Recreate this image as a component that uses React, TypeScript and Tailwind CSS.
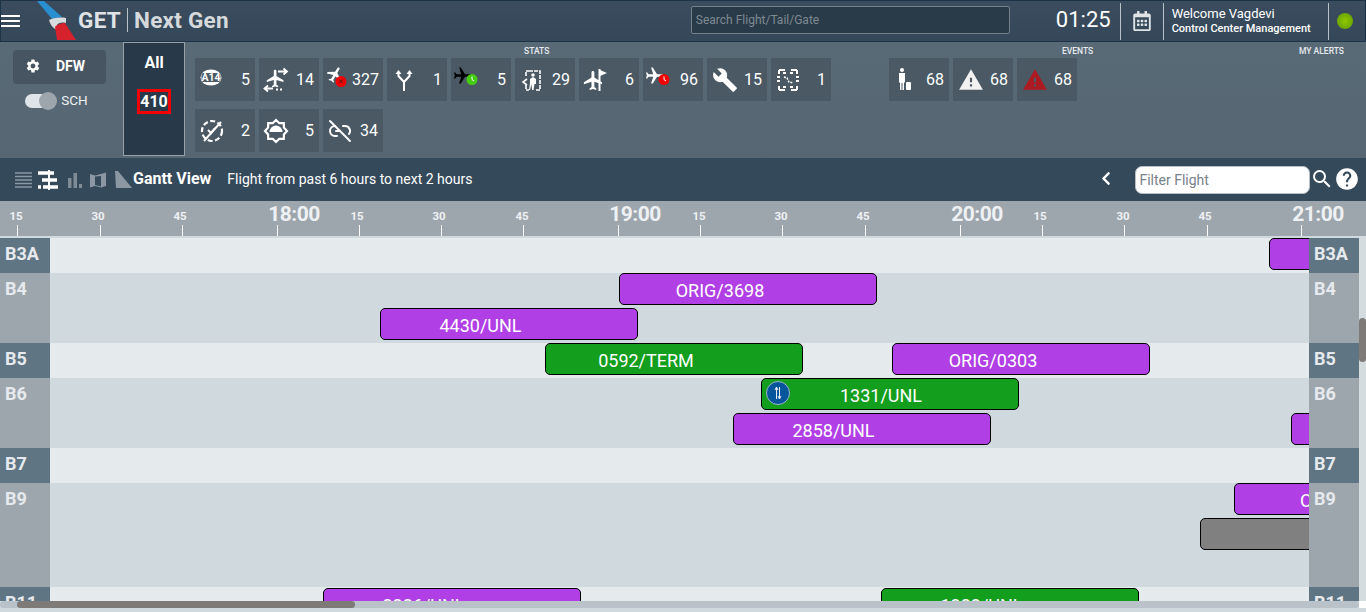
import React from "react";
import { MdBuild, MdHelp, MdSearch, MdSettings, MdWarning, MdMenu } from "react-icons/md";
import { FaChevronLeft, FaRegCalendarAlt } from "react-icons/fa";
import { Link2Off } from "lucide-react";

const PLANE = "M21 16v-2l-8-5V3.5c0-.83-.67-1.5-1.5-1.5S10 2.67 10 3.5V9l-8 5v2l8-2.5V19l-2 1.5V22l3.5-1 3.5 1v-1.5L13 19v-5.5l8 2.5z";

function Svg({ children, w = 24, h = 24 }: { children: React.ReactNode; w?: number; h?: number }) {
  return (
    <svg width={w} height={h} viewBox="0 0 24 24" className="shrink-0 overflow-visible">
      {children}
    </svg>
  );
}

const IconA14 = () => (
  <Svg>
    <ellipse cx="11" cy="9.500" rx="10.500" ry="8" fill="white" />
    <rect x="1.500" y="5" width="19" height="9" rx="2" fill="#4a5964" />
    <text x="11" y="13.300" textAnchor="middle" fontSize="10.500" fontWeight="700" fill="white" fontFamily="Roboto">A14</text>
  </Svg>
);
const IconPlaneArrows = () => (
  <Svg>
    <path d={PLANE} fill="white" transform="translate(1 0) scale(.88)" />
    <path d="M14 3.500h8M19.500 .5l3.500 3-3.500 3M9 20.500H1M4 17.500L.5 20.500 4 23.500" stroke="white" strokeWidth="1.800" fill="none" />
    <path d="M12 21.500h7" stroke="white" strokeWidth="1.800" strokeDasharray="2 2" />
  </Svg>
);
const IconPlaneX = () => (
  <Svg>
    <path d={PLANE} fill="white" transform="translate(7 6.500) rotate(30) scale(.8) translate(-11.500 -12)" />
    <circle cx="13" cy="13.500" r="5.500" fill="#f00000" />
    <path d="M11.300 11.800l3.400 3.400M14.700 11.800l-3.400 3.400" stroke="#8a1010" strokeWidth="1.300" />
  </Svg>
);
const IconPlaneClock = ({ fill, badge }: { fill: string; badge: string }) => (
  <Svg>
    <path d={PLANE} fill={fill} transform="translate(6.500 7.500) rotate(90) scale(.85) translate(-11.500 -12)" />
    <circle cx="16" cy="11.500" r="5.500" fill={badge} />
    <path d="M16 8.500v3l2 1.500" stroke="white" strokeWidth="1" fill="none" />
  </Svg>
);
const IconFork = () => (
  <Svg>
    <path d="M12 23v-9M12 14L6.500 8V4M12 14l5.500-6V4" stroke="white" strokeWidth="2" fill="none" />
    <path d="M3.500 6l3-4 3 4zM14.500 6l3-4 3 4z" fill="white" />
  </Svg>
);
const IconDoor = () => (
  <Svg>
    <path d="M9 3h11v19h-5M6 8V3h3M6 17v5h3" stroke="white" strokeWidth="1.600" fill="none" strokeDasharray="4 1" />
    <circle cx="13" cy="7" r="1.800" fill="white" />
    <path d="M10 11l3-2 3 2v5h-1.500l-1 6h-1.500l-.5-6-1.500 6H9l1-7z" fill="white" />
    <path d="M7 11l-4 3 4 3" stroke="white" strokeWidth="1.600" fill="none" />
  </Svg>
);
const IconPlaneFlag = () => (
  <Svg>
    <path d={PLANE} fill="white" transform="translate(-2 1) scale(.95)" />
    <path d="M15.500 1v22" stroke="white" strokeWidth="2" />
    <path d="M16 2l7 3-7 3z" fill="white" />
  </Svg>
);
const IconDashBox = () => (
  <Svg>
    <path d="M3 2h6M3 2v4M21 2h-6M21 2v4M3 22h6M3 22v-4M21 22h-6M21 22v-4M1 9h3M20 9h3M1 13h3M20 13h3M7 5h3M14 5h3M7 19h3M14 19h3" stroke="white" strokeWidth="2" fill="none" />
    <path d="M8 9l3 1 2 4 4 1" stroke="white" strokeWidth="1.600" fill="none" strokeDasharray="2 1" />
  </Svg>
);
const IconDashCircle = () => (
  <Svg>
    <circle cx="12" cy="12" r="10" stroke="white" strokeWidth="2.200" fill="none" strokeDasharray="5 2.500" />
    <path d="M21 3L4 22" stroke="white" strokeWidth="2" />
    <path d="M8 11l3 3 4-5" stroke="white" strokeWidth="2" fill="none" />
  </Svg>
);
const IconBadge = () => (
  <Svg>
    <path d="M12 1l3.300 3.200 4.500-.1.1 4.500L23 12l-3.100 3.400-.1 4.500-4.500-.1L12 23l-3.300-3.200-4.500.1-.1-4.500L1 12l3.100-3.400.1-4.500 4.500.1z" fill="none" stroke="white" strokeWidth="2.200" />
    <path d="M5.500 13a6.500 6.500 0 0 1 13 0z" fill="white" />
  </Svg>
);
const IconPerson = () => (
  <Svg>
    <circle cx="8" cy="2" r="2" fill="white" />
    <path d="M5 5h6v9.500h-1V22H8.500v-7h-1v7H6v-7.500H5z" fill="white" />
    <rect x="12" y="14" width="5" height="8" rx="1" fill="white" />
  </Svg>
);

function Tile({ icon, value }: { icon: React.ReactNode; value: number }) {
  return (
    <div className="flex h-[43px] w-[60px] items-center justify-between bg-[#4a5964] pl-[5px] pr-[5px]">
      <div className="flex w-[24px] justify-start">{icon}</div>
      <span className="text-[16px] leading-none text-white">{value}</span>
    </div>
  );
}

function SmallHead({ children, cls }: { children: React.ReactNode; cls: string }) {
  return <div className={`absolute top-[4px] text-[8.500px] font-medium leading-[10px] text-[#e6eaee] ${cls}`}>{children}</div>;
}

const ticks = [
  { x: "left-[17px]", l: "left-[1px]", t: "15", hour: false },
  { x: "left-[100px]", l: "left-[83px]", t: "30", hour: false },
  { x: "left-[182px]", l: "left-[165px]", t: "45", hour: false },
  { x: "left-[277px]", l: "left-[254px]", t: "18:00", hour: true },
  { x: "left-[359px]", l: "left-[342px]", t: "15", hour: false },
  { x: "left-[441px]", l: "left-[424px]", t: "30", hour: false },
  { x: "left-[523px]", l: "left-[507px]", t: "45", hour: false },
  { x: "left-[618px]", l: "left-[595px]", t: "19:00", hour: true },
  { x: "left-[700px]", l: "left-[684px]", t: "15", hour: false },
  { x: "left-[782px]", l: "left-[766px]", t: "30", hour: false },
  { x: "left-[865px]", l: "left-[848px]", t: "45", hour: false },
  { x: "left-[960px]", l: "left-[937px]", t: "20:00", hour: true },
  { x: "left-[1042px]", l: "left-[1025px]", t: "15", hour: false },
  { x: "left-[1124px]", l: "left-[1108px]", t: "30", hour: false },
  { x: "left-[1207px]", l: "left-[1190px]", t: "45", hour: false },
  { x: "left-[1301px]", l: "left-[1278px]", t: "21:00", hour: true },
];

const rows = [
  { name: "B3A", h: "h-[35px]", light: true },
  { name: "B4", h: "h-[70px]", light: false },
  { name: "B5", h: "h-[35px]", light: true },
  { name: "B6", h: "h-[70px]", light: false },
  { name: "B7", h: "h-[35px]", light: true },
  { name: "B9", h: "h-[104px]", light: false },
  { name: "B11", h: "h-[35px]", light: true },
];

function Labels() {
  return (
    <div className="flex h-[384px] w-[50px] shrink-0 flex-col">
      {rows.map((r) => (
        <div
          key={r.name}
          className={`${r.h} shrink-0 pl-[5px] pt-[5px] text-[18px] font-bold leading-[21px] text-[#e6eaee] ${r.light ? "bg-[#5f7583]" : "bg-[#9ea6ad]"}`}
        >
          {r.name}
        </div>
      ))}
    </div>
  );
}

function Bar({ cls, text, pad, children }: { cls: string; text: string; pad: string; children?: React.ReactNode }) {
  return (
    <div className={`absolute flex h-[32px] w-[258px] items-center justify-center overflow-hidden rounded-[5px] border border-black pt-[3px] text-[18px] leading-none text-white ${cls} ${pad}`}>
      {children}
      {text}
    </div>
  );
}

export default function App() {
  return (
    <div className="relative h-[612px] w-[1366px] overflow-hidden bg-[#cfd9de] font-['Roboto',sans-serif]">
      {/* header */}
      <header className="flex h-[42px] items-center overflow-hidden border border-[#1d3347] bg-gradient-to-b from-[#3a4c5d] to-[#35485a] text-white">
        <MdMenu className="ml-[-3px] h-[24px] w-[24px] shrink-0 scale-x-110 text-white" />
        <svg width="46" height="40" viewBox="0 0 46 40" className="ml-[14px] shrink-0">
          <path d="M1 0h7l18 16-10 2z" fill="#2a8fd0" />
          <path d="M13 19c4-2 10-3 17-2v5c-5-1-8 0-9 2l1 3-3 1c-3-2-5-5-6-9z" fill="#d9dcde" />
          <path d="M19 26c1-2 6-4 10-4l11 17H21z" fill="#d5222c" />
        </svg>
        <span className="ml-[-4px] mb-[2px] text-[22.500px] font-bold leading-none tracking-[0.3px] text-[#dfe3e6]">GET</span>
        <span className="ml-[6px] mb-[2px] h-[24px] w-px bg-[#b9c2c9]" />
        <span className="ml-[6px] mb-[2px] text-[22.500px] font-bold leading-none tracking-[0.25px] text-[#d5d9dc]">Next Gen</span>
        <input
          placeholder="Search Flight/Tail/Gate"
          className="ml-[462px] mb-[3px] h-[28px] w-[319px] rounded-[2px] border border-[#74818b] bg-[#293a48] px-[4px] text-[12px] text-white placeholder:text-[#7f8a93]"
        />
        <span className="ml-[46px] mb-[3px] text-[22px] leading-none text-white">01:25</span>
        <span className="ml-[9px] h-[37px] w-px bg-[#b9c2c9]" />
        <FaRegCalendarAlt className="ml-[12px] h-[20px] w-[18px] shrink-0 text-[#dfe3e6]" />
        <span className="ml-[12px] h-[37px] w-px bg-[#b9c2c9]" />
        <div className="ml-[8px] w-[148px] shrink-0 leading-none">
          <div className="text-[13px] leading-[16px]">Welcome Vagdevi</div>
          <div className="whitespace-nowrap text-[11px] font-medium leading-[14px]">Control Center Management</div>
        </div>
        <span className="ml-[8px] h-[37px] w-px bg-[#b9c2c9]" />
        <span className="ml-[8px] h-[16px] w-[16px] rounded-full bg-[radial-gradient(circle,#8fc800,#5f9a00)]" />
      </header>

      {/* stats */}
      <section className="relative flex h-[116px] bg-gradient-to-b from-[#596a77] to-[#566672]">
        <div className="ml-[13px] mt-[8px] flex w-[93px] flex-col items-center">
          <div className="flex h-[34px] w-[93px] items-center rounded-[4px] bg-[#465561] pb-[2px] text-white">
            <MdSettings className="ml-[12px] h-[16px] w-[16px]" />
            <span className="ml-[15px] text-[14px] font-bold">DFW</span>
          </div>
          <div className="ml-[-6px] mt-[8px] flex items-center">
            <div className="relative flex h-[18px] w-[32px] items-center">
              <div className="h-[14px] w-[30px] rounded-full bg-[#dfe4e8]" />
              <div className="absolute right-0 h-[18px] w-[18px] rounded-full bg-[#9ea6ad]" />
            </div>
            <span className="ml-[4px] text-[13.500px] leading-none text-[#eef1f3]">SCH</span>
          </div>
        </div>
        <div className="ml-[17px] flex h-[114px] w-[62px] flex-col items-center border border-[#98a1a8] bg-[#283a4a] text-white">
          <span className="mt-[10px] text-[16px] font-bold leading-[19px]">All</span>
          <span className="mt-[17px] border-[3px] border-[#f00000] px-0 text-[16px] font-bold leading-[19px]">410</span>
        </div>
        <div className="ml-[10px] mt-[16px] flex flex-col gap-[8px]">
          <div className="flex gap-[4px]">
            <Tile icon={<IconA14 />} value={5} />
            <Tile icon={<IconPlaneArrows />} value={14} />
            <Tile icon={<IconPlaneX />} value={327} />
            <Tile icon={<IconFork />} value={1} />
            <Tile icon={<IconPlaneClock fill="black" badge="#44cc11" />} value={5} />
            <Tile icon={<IconDoor />} value={29} />
            <Tile icon={<IconPlaneFlag />} value={6} />
            <Tile icon={<IconPlaneClock fill="white" badge="#f00000" />} value={96} />
            <Tile icon={<MdBuild className="h-[26px] w-[26px] shrink-0 text-white" />} value={15} />
            <Tile icon={<IconDashBox />} value={1} />
          </div>
          <div className="flex gap-[4px]">
            <Tile icon={<IconDashCircle />} value={2} />
            <Tile icon={<IconBadge />} value={5} />
            <Tile icon={<Link2Off className="h-[24px] w-[24px] text-white" strokeWidth={2} />} value={34} />
          </div>
        </div>
        <div className="ml-[58px] mt-[16px] flex gap-[4px] self-start">
          <Tile icon={<IconPerson />} value={68} />
          <Tile icon={<MdWarning className="h-[26px] w-[26px] shrink-0 text-[#f2f2f2]" />} value={68} />
          <Tile icon={<MdWarning className="h-[26px] w-[26px] shrink-0 text-[#ad1a22]" />} value={68} />
        </div>
        <SmallHead cls="left-[524px]">STATS</SmallHead>
        <SmallHead cls="left-[1062px]">EVENTS</SmallHead>
        <SmallHead cls="left-[1299px]">MY ALERTS</SmallHead>
      </section>

      {/* toolbar */}
      <section className="flex h-[43px] items-center bg-[#34495a] text-white">
        <svg width="18" height="16" viewBox="0 0 18 16" className="ml-[15px] shrink-0">
          <path d="M0 1h17M0 4.500h17M0 8h17M0 11.500h17M0 15h17" stroke="#8b98a3" strokeWidth="1.600" />
        </svg>
        <svg width="20" height="20" viewBox="0 0 20 20" className="ml-[5px] shrink-0">
          <path d="M0 3h10M12 3h4M4 10h6M12 10h7M0 17h3M5 17h5M12 17h8" stroke="white" strokeWidth="3.600" />
          <path d="M11 0v20" stroke="white" strokeWidth="2" />
        </svg>
        <svg width="14" height="16" viewBox="0 0 14 16" className="ml-[10px] shrink-0">
          <path d="M0 6h3.500v10H0zM5.500 1H9v15H5.500zM11 12h3v4h-3z" fill="#7f8b95" />
        </svg>
        <svg width="16" height="16" viewBox="0 0 16 16" className="ml-[8px] shrink-0">
          <path d="M0 2l5 1.500L11 2l5-1.500V14l-5 1.500L5 14l-5 1.500z" fill="#8b98a3" />
          <path d="M5 4.500v8.500l6 1.500V4z" fill="#34495a" />
        </svg>
        <svg width="17" height="17" viewBox="0 0 17 17" className="ml-[9px] shrink-0">
          <path d="M0 0h3l14 17H1z" fill="#8b98a3" />
        </svg>
        <span className="ml-[1px] mb-[2px] whitespace-nowrap text-[16px] font-bold">Gantt View</span>
        <span className="ml-[16px] whitespace-nowrap text-[14px]">Flight from past 6 hours to next 2 hours</span>
        <FaChevronLeft className="ml-[628px] mb-[2px] h-[15px] w-[12px] shrink-0" />
        <input
          placeholder="Filter Flight"
          className="ml-[23px] h-[28px] w-[175px] rounded-[7px] border border-[#b7bfc5] bg-white px-[3px] text-[14px] text-[#333] placeholder:text-[#77828b]"
        />
        <MdSearch className="mb-[2px] h-[24px] w-[24px] shrink-0" />
        <MdHelp className="mb-[1px] h-[26px] w-[26px] shrink-0" />
      </section>

      {/* ruler */}
      <section className="relative h-[35px] bg-[#9ea6ad]">
        {ticks.map((t) => (
          <React.Fragment key={t.x}>
            <div className={`absolute bottom-0 h-[11px] w-px bg-white ${t.x}`} />
            <div
              className={
                t.hour
                  ? `absolute top-[1px] w-[80px] text-center text-[21px] font-bold leading-[24px] tracking-[-0.5px] text-[#eef1f4] ${t.l}`
                  : `absolute top-[8px] w-[30px] text-center text-[11.500px] font-bold leading-[14px] text-[#eef1f4] ${t.l}`
              }
            >
              {t.t}
            </div>
          </React.Fragment>
        ))}
      </section>

      {/* gantt */}
      <section className="mr-[7px] flex h-[365px] overflow-hidden bg-[#cfd9de] pt-[2px]">
        <Labels />
        <div className="relative h-[384px] min-w-0 flex-1 overflow-hidden">
          {rows.map((r) => (
            <div key={r.name} className={`${r.h} ${r.light ? "bg-[#e5eaed]" : "bg-[#cfd9de]"}`} />
          ))}
          <Bar cls="left-[1219px] top-[0px] bg-[#b13fe6]" text="" pad="" />
          <Bar cls="left-[569px] top-[35px] bg-[#b13fe6]" text="ORIG/3698" pad="pr-[56px]" />
          <Bar cls="left-[330px] top-[70px] bg-[#b13fe6]" text="4430/UNL" pad="pr-[57px]" />
          <Bar cls="left-[495px] top-[105px] bg-[#149e1e]" text="0592/TERM" pad="pr-[56px]" />
          <Bar cls="left-[842px] top-[105px] bg-[#b13fe6]" text="ORIG/0303" pad="pr-[56px]" />
          <Bar cls="left-[711px] top-[140px] bg-[#149e1e]" text="1331/UNL" pad="pr-[18px]">
            <span className="absolute left-[4px] top-[2px] flex h-[24px] w-[24px] items-center justify-center rounded-full border border-[#9db5c9] bg-[#07559a]">
              <svg width="12" height="16" viewBox="0 0 12 16">
                <path d="M4.500 14V3M4.500 2L3 5M4.500 2L6 5M7.500 2v11M7.500 14L6 11M7.500 14L9 11" stroke="white" strokeWidth=".9" fill="none" />
              </svg>
            </span>
          </Bar>
          <Bar cls="left-[683px] top-[175px] bg-[#b13fe6]" text="2858/UNL" pad="pr-[57px]" />
          <Bar cls="left-[1241px] top-[175px] bg-[#b13fe6]" text="" pad="" />
          <Bar cls="left-[1184px] top-[245px] bg-[#b13fe6] !justify-start" text="ORIG/1234" pad="pl-[65px]" />
          <Bar cls="left-[1150px] top-[280px] bg-[#808080]" text="" pad="" />
          <Bar cls="left-[273px] top-[350px] bg-[#b13fe6]" text="2226/UNL" pad="pr-[57px]" />
          <Bar cls="left-[831px] top-[350px] bg-[#149e1e]" text="1323/UNL" pad="pr-[57px]" />
        </div>
        <Labels />
      </section>

      {/* horizontal scrollbar */}
      <div className="absolute left-0 top-[601px] h-[7px] w-[1359px] rounded-full bg-[#b8c2c8]">
        <div className="ml-[17px] h-[7px] w-[338px] rounded-full bg-[#7d7a77]" />
      </div>
      <div className="absolute left-[1359px] top-[601px] h-[7px] w-[7px] bg-white" />
      {/* vertical scrollbar */}
      <div className="absolute left-[1359px] top-[236px] h-[365px] w-[7px] bg-[#d5dcdf]">
        <div className="mt-[82px] h-[44px] w-[7px] rounded-full bg-[#7d7a77]" />
      </div>
    </div>
  );
}
